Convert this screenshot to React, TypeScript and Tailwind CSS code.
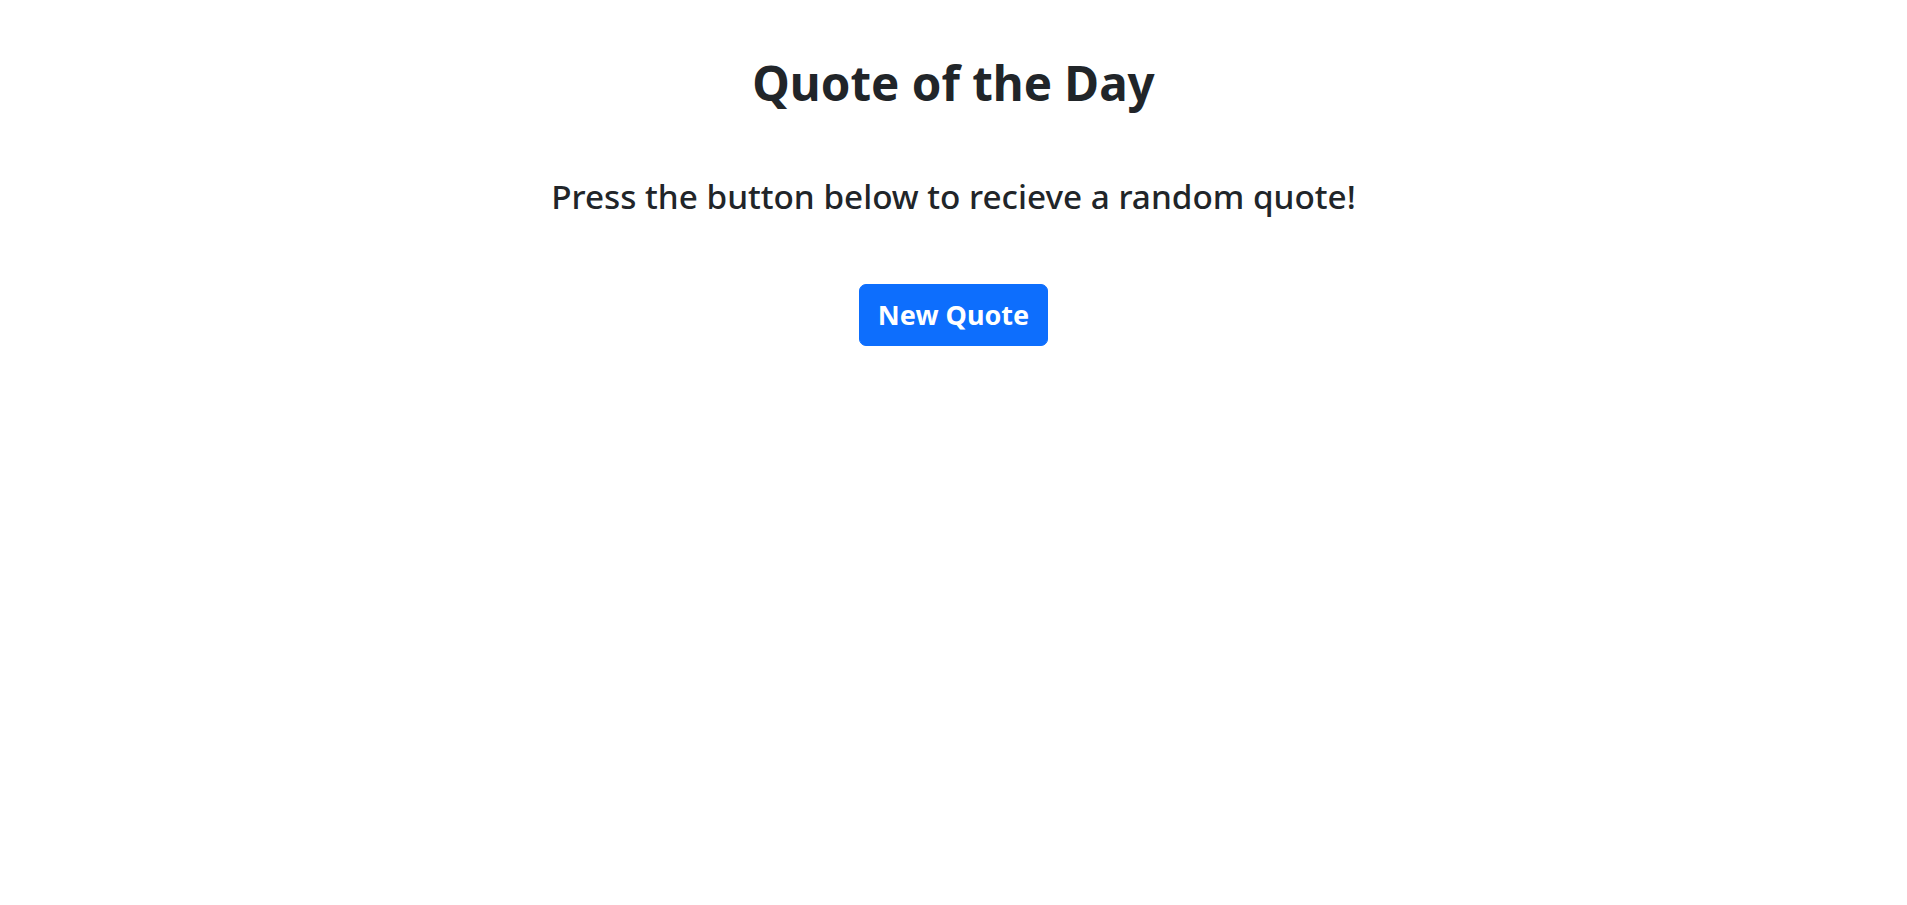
export default function App() {
  return (
    <div className="min-h-screen bg-white text-[#212529] font-['Noto_Sans',sans-serif]">
      <div className="flex flex-col items-center pt-[54px] text-center">
        <h1 className="text-[47.5px] font-bold leading-[1.2] mb-[66px]">Quote of the Day</h1>
        <h3 className="text-[33.3px] font-medium leading-[1.2] mb-[67px]">
          Press the button below to recieve a random quote!
        </h3>
        <button className="bg-[#0d6efd] text-white font-bold text-[27px] leading-[38px] px-[18px] py-[11px] rounded-[7px] border border-[#0d6efd]">
          New Quote
        </button>
      </div>
    </div>
  )
}
